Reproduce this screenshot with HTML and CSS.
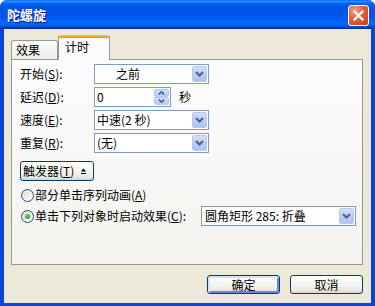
FILE: index.html
```html
<!DOCTYPE html>
<html lang="zh-CN">
<head>
<meta charset="utf-8">
<title>陀螺旋</title>
<link rel="stylesheet" href="styles.css">
</head>
<body>
<div class="window">
  <div class="titlebar">
    <span class="title">陀螺旋</span>
    <button class="close" aria-label="关闭">
      <svg width="11" height="11" viewBox="0 0 11 11"><path d="M1.5 1.5 L9.5 9.5 M9.5 1.5 L1.5 9.5" stroke="#fff" stroke-width="2.2" stroke-linecap="square"/></svg>
    </button>
  </div>
  <div class="client">
    <div class="tabs">
      <div class="tab">效果</div>
      <div class="tab active">计时</div>
    </div>
    <div class="panel">
      <div class="row">
        <span class="lbl">开始(<u>S</u>):</span>
        <div class="combo w-main"><span class="val val-start">之前</span><span class="drop"><svg width="9" height="6" viewBox="0 0 9 6"><path d="M1 1 L4.5 4.5 L8 1" fill="none" stroke="#4D6185" stroke-width="2"/></svg></span></div>
      </div>
      <div class="row">
        <span class="lbl">延迟(<u>D</u>):</span>
        <div class="combo w-spin"><span class="val">0</span><span class="spin"><span class="spin-btn"><svg width="7" height="4" viewBox="0 0 7 4"><path d="M0.8 3.5 L3.5 0.8 L6.2 3.5" fill="none" stroke="#4D6185" stroke-width="1.6"/></svg></span><span class="spin-btn"><svg width="7" height="4" viewBox="0 0 7 4"><path d="M0.8 0.5 L3.5 3.2 L6.2 0.5" fill="none" stroke="#4D6185" stroke-width="1.6"/></svg></span></span></div>
        <span class="unit">秒</span>
      </div>
      <div class="row">
        <span class="lbl">速度(<u>E</u>):</span>
        <div class="combo w-main"><span class="val">中速(2 秒)</span><span class="drop"><svg width="9" height="6" viewBox="0 0 9 6"><path d="M1 1 L4.5 4.5 L8 1" fill="none" stroke="#4D6185" stroke-width="2"/></svg></span></div>
      </div>
      <div class="row">
        <span class="lbl">重复(<u>R</u>):</span>
        <div class="combo w-main"><span class="val">(无)</span><span class="drop"><svg width="9" height="6" viewBox="0 0 9 6"><path d="M1 1 L4.5 4.5 L8 1" fill="none" stroke="#4D6185" stroke-width="2"/></svg></span></div>
      </div>
      <button class="btn trigger">触发器(<u>T</u>)<svg class="updown" width="5" height="7" viewBox="0 0 5 7"><path d="M2.5 0.5 L5 3.5 L0 3.5 Z" fill="#000"/><rect x="0" y="5" width="5" height="1" fill="#000"/></svg></button>
      <div class="radio-row first">
        <span class="radio"></span>
        <span class="radio-text">部分单击序列动画(<u>A</u>)</span>
      </div>
      <div class="radio-row second">
        <span class="radio checked"></span>
        <span class="radio-text">单击下列对象时启动效果(<u>C</u>):</span>
        <div class="combo w-obj"><span class="val">圆角矩形 285: 折叠</span><span class="drop"><svg width="9" height="6" viewBox="0 0 9 6"><path d="M1 1 L4.5 4.5 L8 1" fill="none" stroke="#4D6185" stroke-width="2"/></svg></span></div>
      </div>
    </div>
    <div class="actions">
      <button class="btn default">确定</button>
      <button class="btn">取消</button>
    </div>
  </div>
</div>
</body>
</html>
```
FILE: styles.css
```css
body {
  margin: 0;
  background: #ffffff;
  font-family: "Noto Sans CJK SC", "Noto Sans", sans-serif;
  font-size: 12px;
  color: #000;
}

.window {
  width: 375px;
  height: 306px;
  display: flex;
  flex-direction: column;
  background: #0846D8;
  border-radius: 7px 7px 0 0;
  overflow: hidden;
}

.titlebar {
  box-sizing: border-box;
  height: 29px;
  flex: none;
  display: flex;
  align-items: center;
  justify-content: space-between;
  padding: 1px 6px 0 7px;
  background: linear-gradient(to bottom, #0058EE 0%, #3593FF 4%, #288EFF 6%, #127DFF 8%, #036FFC 10%, #0262EE 14%, #0057E5 20%, #0054E3 24%, #0055EB 56%, #005BF5 66%, #026AFE 76%, #0062EF 86%, #0052D6 92%, #0040AB 94%, #003092 100%);
}

.title {
  color: #fff;
  font-weight: 700;
  font-size: 13px;
  line-height: 16px;
  text-shadow: 1px 1px 0 #0A1883;
}

.close {
  box-sizing: border-box;
  width: 21px;
  height: 21px;
  padding: 0;
  border: 1px solid #fff;
  border-radius: 3px;
  background: radial-gradient(circle at 30% 25%, #F0A48C 0%, #E4633F 40%, #D14A25 80%, #C23A18 100%);
  display: flex;
  align-items: center;
  justify-content: center;
}

.client {
  flex: 1;
  margin: 0 4px 3px 4px;
  background: #ECE9D8;
  padding: 6px 8px 0 7px;
  display: flex;
  flex-direction: column;
}

.tabs {
  display: flex;
  align-items: flex-end;
  height: 24px;
  flex: none;
}

.tab {
  box-sizing: border-box;
  width: 47px;
  height: 19px;
  border: 1px solid #919B9C;
  border-bottom: none;
  border-radius: 3px 3px 0 0;
  background: linear-gradient(#FFFFFF, #ECEBE6);
  padding: 2px 0 0 4px;
  line-height: 14px;
}

.tab.active {
  position: relative;
  z-index: 1;
  width: 52px;
  height: 25px;
  margin-bottom: -1px;
  border-top: none;
  background: #FCFCFE;
  padding: 5px 0 0 6px;
}

.tab.active::before {
  content: "";
  position: absolute;
  left: -1px;
  right: -1px;
  top: 0;
  height: 3px;
  border-radius: 3px 3px 0 0;
  background: linear-gradient(#FFC83C, #E68B2C);
}

.panel {
  box-sizing: border-box;
  height: 206px;
  flex: none;
  border: 1px solid #919B9C;
  background: linear-gradient(#FCFCFE, #F4F3EE);
  padding: 4px 6px 0 8px;
  display: flex;
  flex-direction: column;
  align-items: flex-start;
}

.row {
  display: flex;
  align-items: center;
  height: 20px;
  margin-bottom: 3px;
}

.lbl {
  width: 74px;
  flex: none;
  line-height: 14px;
}

.combo {
  box-sizing: border-box;
  height: 20px;
  border: 1px solid #7F9DB9;
  background: #fff;
  display: flex;
  align-items: center;
  justify-content: space-between;
  padding-left: 2px;
  line-height: 14px;
}

.w-main { width: 115px; }
.w-spin { width: 77px; }
.w-obj { width: 155px; margin-left: auto; padding-left: 3px; }

.val-start { padding-left: 19px; }

.drop {
  box-sizing: border-box;
  width: 15px;
  height: 16px;
  margin-right: 1px;
  border: 1px solid #B5C7F2;
  border-radius: 2px;
  background: linear-gradient(#D2DEFD, #B7CAF6 60%, #AFC3F3);
  display: flex;
  align-items: center;
  justify-content: center;
}

.spin {
  display: flex;
  flex-direction: column;
  margin-right: 1px;
  gap: 0;
}

.spin-btn {
  box-sizing: border-box;
  width: 15px;
  height: 8px;
  border: 1px solid #B5C7F2;
  border-radius: 2px;
  background: linear-gradient(#D2DEFD, #B3C7F5);
  display: flex;
  align-items: center;
  justify-content: center;
}

.unit {
  margin-left: 8px;
  line-height: 14px;
}

.btn {
  box-sizing: border-box;
  width: 73px;
  height: 19px;
  padding: 0;
  border: 1px solid #003C74;
  border-radius: 3px;
  background: linear-gradient(#FFFFFF 0%, #F3F2EE 60%, #E6E3DA 90%, #D6D0C5 100%);
  font-family: inherit;
  font-size: 12px;
  line-height: 14px;
  color: #000;
  display: flex;
  align-items: center;
  justify-content: center;
}

.btn.default {
  box-shadow: inset 1px 1px 0 1px #CEE7FF, inset -1px -1px 0 1px #6982EE;
}

.trigger {
  width: 74px;
  height: 20px;
  margin-top: 5px;
  justify-content: flex-start;
  padding-left: 2px;
}

.updown {
  margin-left: 7px;
}

.radio-row {
  display: flex;
  align-items: center;
  align-self: stretch;
  line-height: 14px;
}

.radio-row.first {
  height: 20px;
  margin-top: 4px;
}

.radio-row.second {
  height: 22px;
}

.radio {
  box-sizing: border-box;
  width: 13px;
  height: 13px;
  margin-left: 1px;
  margin-right: 1px;
  border: 1px solid #1C5180;
  border-radius: 50%;
  background: linear-gradient(135deg, #DCD9CF 0%, #F2F1EC 60%, #FFFFFF 100%);
  display: flex;
  align-items: center;
  justify-content: center;
  flex: none;
}

.radio.checked::after {
  content: "";
  width: 5px;
  height: 5px;
  border-radius: 50%;
  background: radial-gradient(circle at 35% 35%, #6FE06F 0%, #2DB32D 50%, #1C8E1C 100%);
}

.actions {
  display: flex;
  justify-content: flex-end;
  gap: 10px;
  margin-top: 10px;
}
```
